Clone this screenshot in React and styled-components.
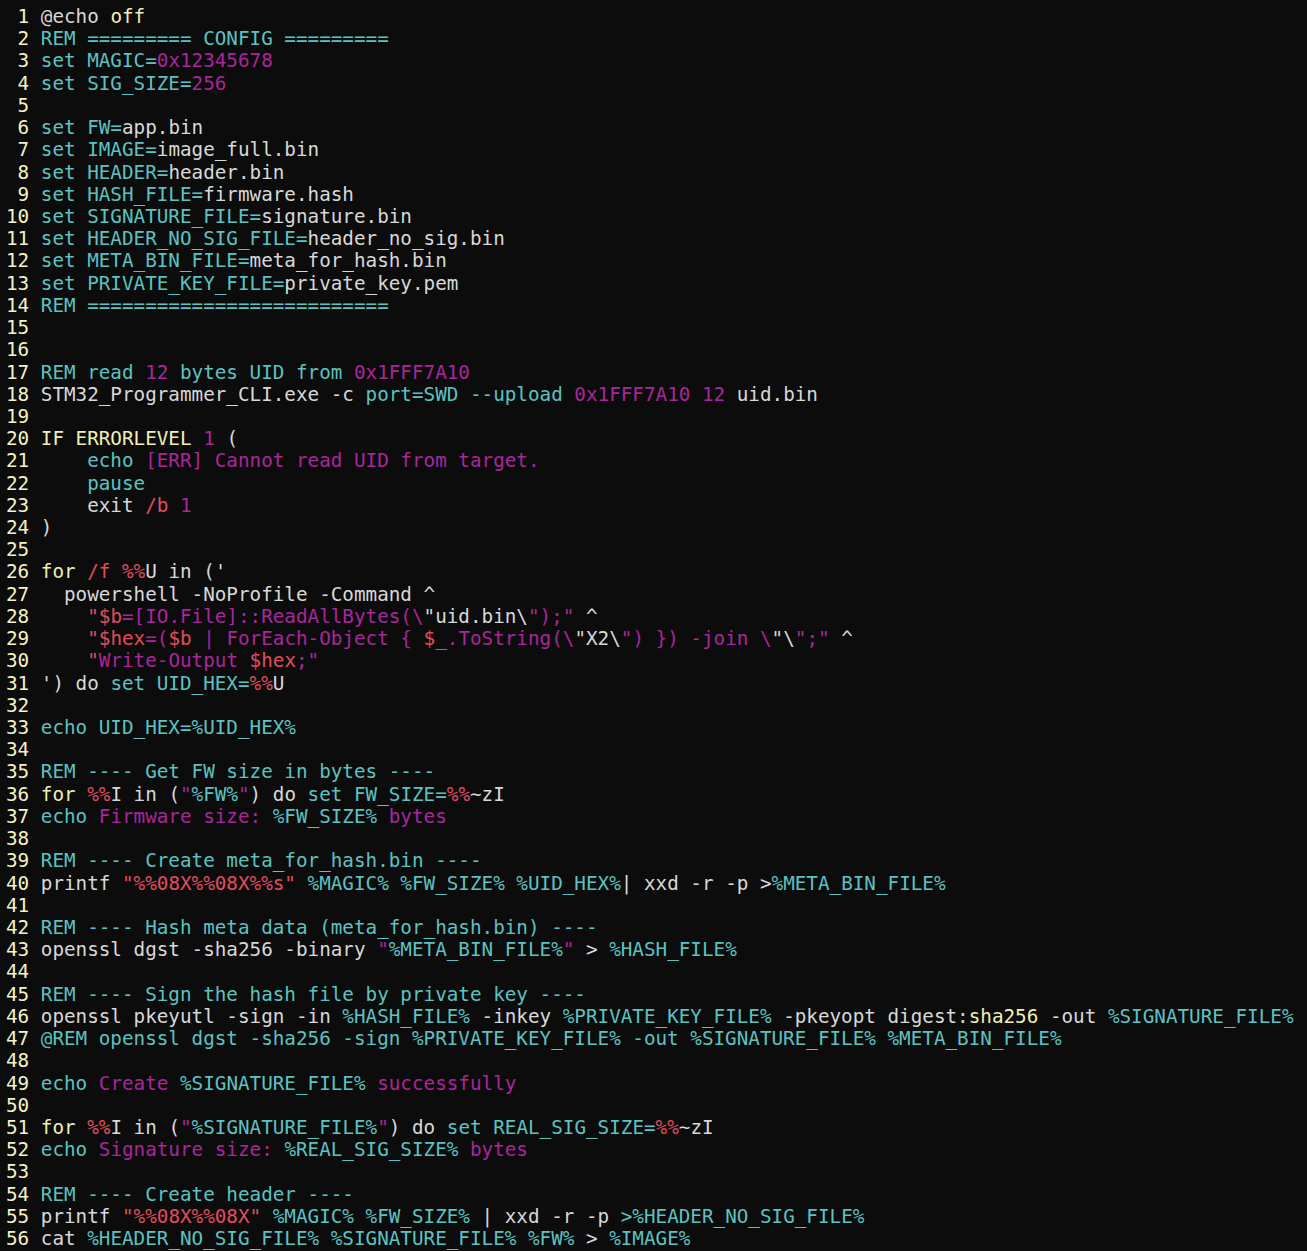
import React from 'react'
import styled, { createGlobalStyle } from 'styled-components'

const palette = {
    w: '#d8d8d8',
    c: '#5cc2c2',
    m: '#aa269c',
    r: '#e24c5c',
    y: '#f1efb4',
}

// each line: list of [tone, text]
const lines = [
    [['w', '@echo'], ['y', ' off']],
    [['c', 'REM ========= CONFIG =========']],
    [['c', 'set MAGIC='], ['m', '0x12345678']],
    [['c', 'set SIG_SIZE='], ['m', '256']],
    [],
    [['c', 'set FW='], ['w', 'app.bin']],
    [['c', 'set IMAGE='], ['w', 'image_full.bin']],
    [['c', 'set HEADER='], ['w', 'header.bin']],
    [['c', 'set HASH_FILE='], ['w', 'firmware.hash']],
    [['c', 'set SIGNATURE_FILE='], ['w', 'signature.bin']],
    [['c', 'set HEADER_NO_SIG_FILE='], ['w', 'header_no_sig.bin']],
    [['c', 'set META_BIN_FILE='], ['w', 'meta_for_hash.bin']],
    [['c', 'set PRIVATE_KEY_FILE='], ['w', 'private_key.pem']],
    [['c', 'REM ==========================']],
    [],
    [],
    [['c', 'REM read '], ['m', '12'], ['c', ' bytes UID from '], ['m', '0x1FFF7A10']],
    [['w', 'STM32_Programmer_CLI.exe -c '], ['c', 'port=SWD --upload '], ['m', '0x1FFF7A10 12'], ['w', ' uid.bin']],
    [],
    [['y', 'IF ERRORLEVEL '], ['m', '1'], ['w', ' (']],
    [['c', '    echo '], ['m', '[ERR] Cannot read UID from target.']],
    [['c', '    pause']],
    [['w', '    exit '], ['r', '/b'], ['m', ' 1']],
    [['w', ')']],
    [],
    [['y', 'for '], ['r', '/f %%'], ['w', "U in ('"]],
    [['w', '  powershell -NoProfile -Command ^']],
    [['w', '    '], ['r', '"$b'], ['m', '=[IO.File]::ReadAllBytes(\\'], ['w', '"uid.bin\\'], ['m', '");"'], ['w', ' ^']],
    [['w', '    '], ['r', '"$hex'], ['m', '=('], ['r', '$b'], ['m', ' | ForEach-Object { '], ['r', '$_'], ['m', '.ToString(\\'], ['w', '"X2\\'], ['m', '") }) -join \\'], ['w', '"\\'], ['m', '";"'], ['w', ' ^']],
    [['w', '    '], ['r', '"'], ['m', 'Write-Output '], ['r', '$hex'], ['m', ';"']],
    [['w', "') do "], ['c', 'set UID_HEX='], ['r', '%%'], ['w', 'U']],
    [],
    [['c', 'echo UID_HEX=%UID_HEX%']],
    [],
    [['c', 'REM ---- Get FW size in bytes ----']],
    [['y', 'for '], ['r', '%%'], ['w', 'I in ('], ['m', '"'], ['c', '%FW%'], ['m', '"'], ['w', ') do '], ['c', 'set FW_SIZE='], ['r', '%%'], ['w', '~zI']],
    [['c', 'echo '], ['m', 'Firmware size: '], ['c', '%FW_SIZE%'], ['m', ' bytes']],
    [],
    [['c', 'REM ---- Create meta_for_hash.bin ----']],
    [['w', 'printf '], ['r', '"%%08X%%08X%%s"'], ['c', ' %MAGIC% %FW_SIZE% %UID_HEX%'], ['w', '| xxd -r -p >'], ['c', '%META_BIN_FILE%']],
    [],
    [['c', 'REM ---- Hash meta data (meta_for_hash.bin) ----']],
    [['w', 'openssl dgst -sha256 -binary '], ['m', '"'], ['c', '%META_BIN_FILE%'], ['m', '"'], ['w', ' > '], ['c', '%HASH_FILE%']],
    [],
    [['c', 'REM ---- Sign the hash file by private key ----']],
    [['w', 'openssl pkeyutl -sign -in '], ['c', '%HASH_FILE%'], ['w', ' -inkey '], ['c', '%PRIVATE_KEY_FILE%'], ['w', ' -pkeyopt digest:'], ['y', 'sha256'], ['w', ' -out '], ['c', '%SIGNATURE_FILE%']],
    [['c', '@REM openssl dgst -sha256 -sign %PRIVATE_KEY_FILE% -out %SIGNATURE_FILE% %META_BIN_FILE%']],
    [],
    [['c', 'echo '], ['m', 'Create '], ['c', '%SIGNATURE_FILE%'], ['m', ' successfully']],
    [],
    [['y', 'for '], ['r', '%%'], ['w', 'I in ('], ['m', '"'], ['c', '%SIGNATURE_FILE%'], ['m', '"'], ['w', ') do '], ['c', 'set REAL_SIG_SIZE='], ['r', '%%'], ['w', '~zI']],
    [['c', 'echo '], ['m', 'Signature size: '], ['c', '%REAL_SIG_SIZE%'], ['m', ' bytes']],
    [],
    [['c', 'REM ---- Create header ----']],
    [['w', 'printf '], ['r', '"%%08X%%08X"'], ['c', ' %MAGIC% %FW_SIZE%'], ['w', ' | xxd -r -p '], ['c', '>%HEADER_NO_SIG_FILE%']],
    [['w', 'cat '], ['c', '%HEADER_NO_SIG_FILE% %SIGNATURE_FILE% %FW%'], ['w', ' > '], ['c', '%IMAGE%']],
]

const App = () => {
    return (
        <>
            <GlobalStyle />
            <Editor>
                {lines.map((tokens, i) => (
                    <Row key={i}>
                        <Gutter>{i + 1}</Gutter>
                        <Code>
                            {tokens.map(([tone, text], j) => (
                                <Token key={j} $tone={tone}>{text}</Token>
                            ))}
                        </Code>
                    </Row>
                ))}
            </Editor>
        </>
    )
}

const GlobalStyle = createGlobalStyle`
    html, body {
        margin: 0;
        padding: 0;
        background: #0c0c0c;
    }
`

const Editor = styled.div`
    min-height: 1251px;
    box-sizing: border-box;
    background: #0c0c0c;
    padding: 6px 0 0 6px;
    font-family: "DejaVu Sans Mono", "Liberation Mono", monospace;
    font-size: 19.27px;
    overflow: hidden;
`

const Row = styled.div`
    display: flex;
    height: 22.22px;
    line-height: 22.22px;
    white-space: pre;
`

const Gutter = styled.span`
    width: 2ch;
    margin-right: 1ch;
    text-align: right;
    color: #f4f2c6;
    flex-shrink: 0;
`

const Code = styled.span`
    color: ${palette.w};
`

const Token = styled.span`
    color: ${props => palette[props.$tone]};
`

export default App
